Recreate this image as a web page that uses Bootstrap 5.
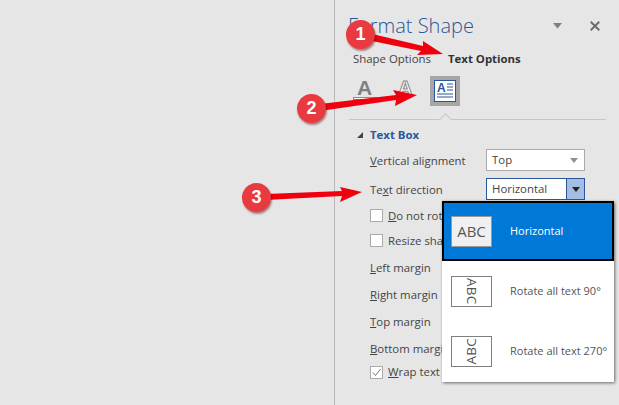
<!DOCTYPE html>
<html lang="en">
<head>
<meta charset="utf-8">
<title>Format Shape</title>
<link href="https://cdn.jsdelivr.net/npm/bootstrap@5.3.0/dist/css/bootstrap.min.css" rel="stylesheet">
<style>
html,body{height:405px;overflow:hidden}
body{background:#e6e6e6;font-family:"Open Sans","Noto Sans",sans-serif;font-size:11.4px;color:#444;position:relative;width:619px}
.canvas-left{width:334px;flex:none}
.pane{width:285px;height:405px;border-left:1px solid #b9b9b9;flex:none;padding-left:13px}
.pane-head{height:52px;padding-top:11px;padding-right:19px}
.pane-title{font-size:20px;font-weight:300;color:#2b579a;line-height:30px;white-space:nowrap}
.pane-tools{height:30px;gap:28px}
.tabs{height:14px;padding-left:5px;line-height:14px;margin-bottom:10px}
.tab-sel{font-weight:700;color:#333}
.tab-a{width:95px}
.icons{height:30px;padding-left:5px}
.ico-a{width:40px;height:30px}
.ico-b{width:37px;height:30px}
.ico-sel{width:30px;height:30px;background:#a6a6a6}
.rule{width:257px;margin-left:1px;height:14px;border-bottom:1px solid #c6c6c6;position:relative}
.rule::after{content:"";position:absolute;left:92px;bottom:-5px;width:9px;height:9px;background:#e6e6e6;border-left:1px solid #c6c6c6;border-top:1px solid #c6c6c6;transform:rotate(45deg)}
.sec{height:21px;padding-left:9px}
.sec-t{font-weight:700;color:#2b579a;font-size:11.4px;margin-left:7px}
.tri{width:0;height:0;border-left:6px solid transparent;border-bottom:6px solid #444}
.frow{padding-left:22px}
.frow-lab{width:116px;flex:none;white-space:nowrap;padding-top:2px}
.fsel{width:99px;height:22px;background:#fff;border:1px solid #ababab;padding-left:5px;line-height:20px}
.fsel-on{border-color:#2b579a}
.caret-g{width:0;height:0;border-left:4px solid transparent;border-right:4px solid transparent;border-top:5px solid #8f8f8f;margin-right:6px}
.caret-b{width:18px;height:100%;background:#a3bde3;border-left:1px solid #2b579a}
.caret-k{width:0;height:0;border-left:4px solid transparent;border-right:4px solid transparent;border-top:5px solid #222}
.box{width:13px;height:13px;background:#fff;border:1px solid #ababab;margin-right:5px;flex:none}
.r1{height:22px;margin-bottom:7px}
.r2{height:22px;margin-bottom:3px}
.r3{height:25px}
.r4{height:27px}
.r-last{height:20px}
.gap-m{margin-top:1px}
.menu-drop{position:absolute;left:442px;top:201px;width:172px;height:181px;background:#fff;box-shadow:1px 1px 3px rgba(0,0,0,.55);font-size:11px;color:#555}
.mi{height:60px;padding-left:9px}
.mi-on{background:#0078d7;border:2px solid #000;color:#fff;padding-left:7px}
.abc{width:41px;height:31px;border:1px solid #7f7f7f;background:#fff;font-size:15px;line-height:1;color:#555;flex:none}
.mi-on .abc{background:#f0f0f0;border-color:#999}
.abc-r{writing-mode:vertical-rl;font-size:13.5px;letter-spacing:.2px}
.abc-l{writing-mode:vertical-rl;transform:rotate(180deg);font-size:13.5px;letter-spacing:.2px}
.mi-t{margin-left:18px;white-space:nowrap}
.over{position:absolute;left:0;top:0;pointer-events:none}
.pin{position:absolute;width:29px;height:29px;border-radius:50%;background:#e93a40;color:#fff;font:700 18px/29px "Liberation Sans",sans-serif;text-align:center;box-shadow:1px 2px 2px rgba(90,0,0,.45)}
.p1{left:346px;top:20px}
.p2{left:297px;top:94px}
.p3{left:242px;top:183px}
</style>
</head>
<body class="d-flex">
<div class="canvas-left"></div>
<div class="pane">
  <div class="pane-head d-flex justify-content-between align-items-start">
    <div class="pane-title">Format Shape</div>
    <div class="pane-tools d-flex align-items-center">
      <svg width="9" height="6" viewBox="0 0 9 6"><path d="M0 0H9L4.500 5.500Z" fill="#7f7f7f"/></svg>
      <svg width="10" height="10" viewBox="0 0 10 10"><path d="M.7 .7L9.300 9.300M9.300 .7L.7 9.300" stroke="#6e6e6e" stroke-width="2"/></svg>
    </div>
  </div>
  <div class="tabs d-flex"><div class="tab-a">Shape Options</div><div class="tab-sel">Text Options</div></div>
  <div class="icons d-flex">
    <div class="ico-a">
      <svg width="40" height="30" viewBox="0 0 40 30"><text x="4" y="19" font-family="Liberation Sans" font-weight="700" font-size="21" fill="#7f7f7f">A</text><rect x=".5" y="21.500" width="23" height="2" fill="#fff" stroke="#8a8a8a"/></svg>
    </div>
    <div class="ico-b">
      <svg width="37" height="30" viewBox="0 0 37 30"><text x="5" y="19" font-family="Liberation Sans" font-weight="700" font-size="20" fill="#fff" stroke="#888" stroke-width="1">A</text></svg>
    </div>
    <div class="ico-sel d-flex align-items-center justify-content-center">
      <svg width="22" height="22" viewBox="0 0 22 22"><rect x=".5" y=".5" width="21" height="21" fill="#fff" stroke="#2b579a"/><text x="3" y="12" font-family="Liberation Sans" font-weight="700" font-size="12" fill="#2b579a">A</text><path d="M13 4H19M13 7H19M13 10H19M3 14H19M3 17H19" stroke="#2b579a"/></svg>
    </div>
  </div>
  <div class="rule mb-2"></div>
  <div class="sec d-flex align-items-start"><span class="tri mt-1"></span><span class="sec-t lh-sm">Text Box</span></div>
  <div class="frow d-flex align-items-center r1"><div class="frow-lab"><u>V</u>ertical alignment</div><div class="fsel d-flex align-items-center justify-content-between"><span>Top</span><span class="caret-g"></span></div></div>
  <div class="frow d-flex align-items-center r2"><div class="frow-lab">Te<u>x</u>t direction</div><div class="fsel fsel-on d-flex align-items-center justify-content-between"><span>Horizontal</span><span class="caret-b d-flex align-items-center justify-content-center"><span class="caret-k"></span></span></div></div>
  <div class="frow d-flex align-items-center r3"><span class="box"></span><span><u>D</u>o not rotate text</span></div>
  <div class="frow d-flex align-items-center r3"><span class="box"></span><span>Resize shape to fit text</span></div>
  <div class="frow d-flex align-items-center r4 gap-m"><u>L</u>eft margin</div>
  <div class="frow d-flex align-items-center r4"><u>R</u>ight margin</div>
  <div class="frow d-flex align-items-center r4"><u>T</u>op margin</div>
  <div class="frow d-flex align-items-center r4"><u>B</u>ottom margin</div>
  <div class="frow d-flex align-items-center r-last"><span class="box d-flex align-items-center justify-content-center"><svg width="11" height="11" viewBox="0 0 11 11"><path d="M2 5.500L4.500 8.500L9.500 2" fill="none" stroke="#777" stroke-width="1"/></svg></span><span><u>W</u>rap text in shape</span></div>
</div>

<div class="menu-drop">
  <div class="mi mi-on d-flex align-items-center"><div class="abc d-flex align-items-center justify-content-center">ABC</div><div class="mi-t">Horizontal</div></div>
  <div class="mi d-flex align-items-center"><div class="abc d-flex align-items-center justify-content-center"><span class="abc-r">ABC</span></div><div class="mi-t">Rotate all text 90°</div></div>
  <div class="mi d-flex align-items-center"><div class="abc d-flex align-items-center justify-content-center"><span class="abc-l">ABC</span></div><div class="mi-t">Rotate all text 270°</div></div>
</div>

<svg class="over" width="619" height="405" viewBox="0 0 619 405">
  <g fill="#f0000f">
    <path d="M368 33L423 46L423 41L443 54L417 55L421 51L367 40Z"/>
    <path d="M320 104L396 95L393 90L417 95L395 106L396 100L320 111Z"/>
    <path d="M266 194L342 191L340 187L362 192L340 202L342 196L266 200Z"/>
  </g>
</svg>
<div class="pin p1">1</div>
<div class="pin p2">2</div>
<div class="pin p3">3</div>
</body>
</html>
